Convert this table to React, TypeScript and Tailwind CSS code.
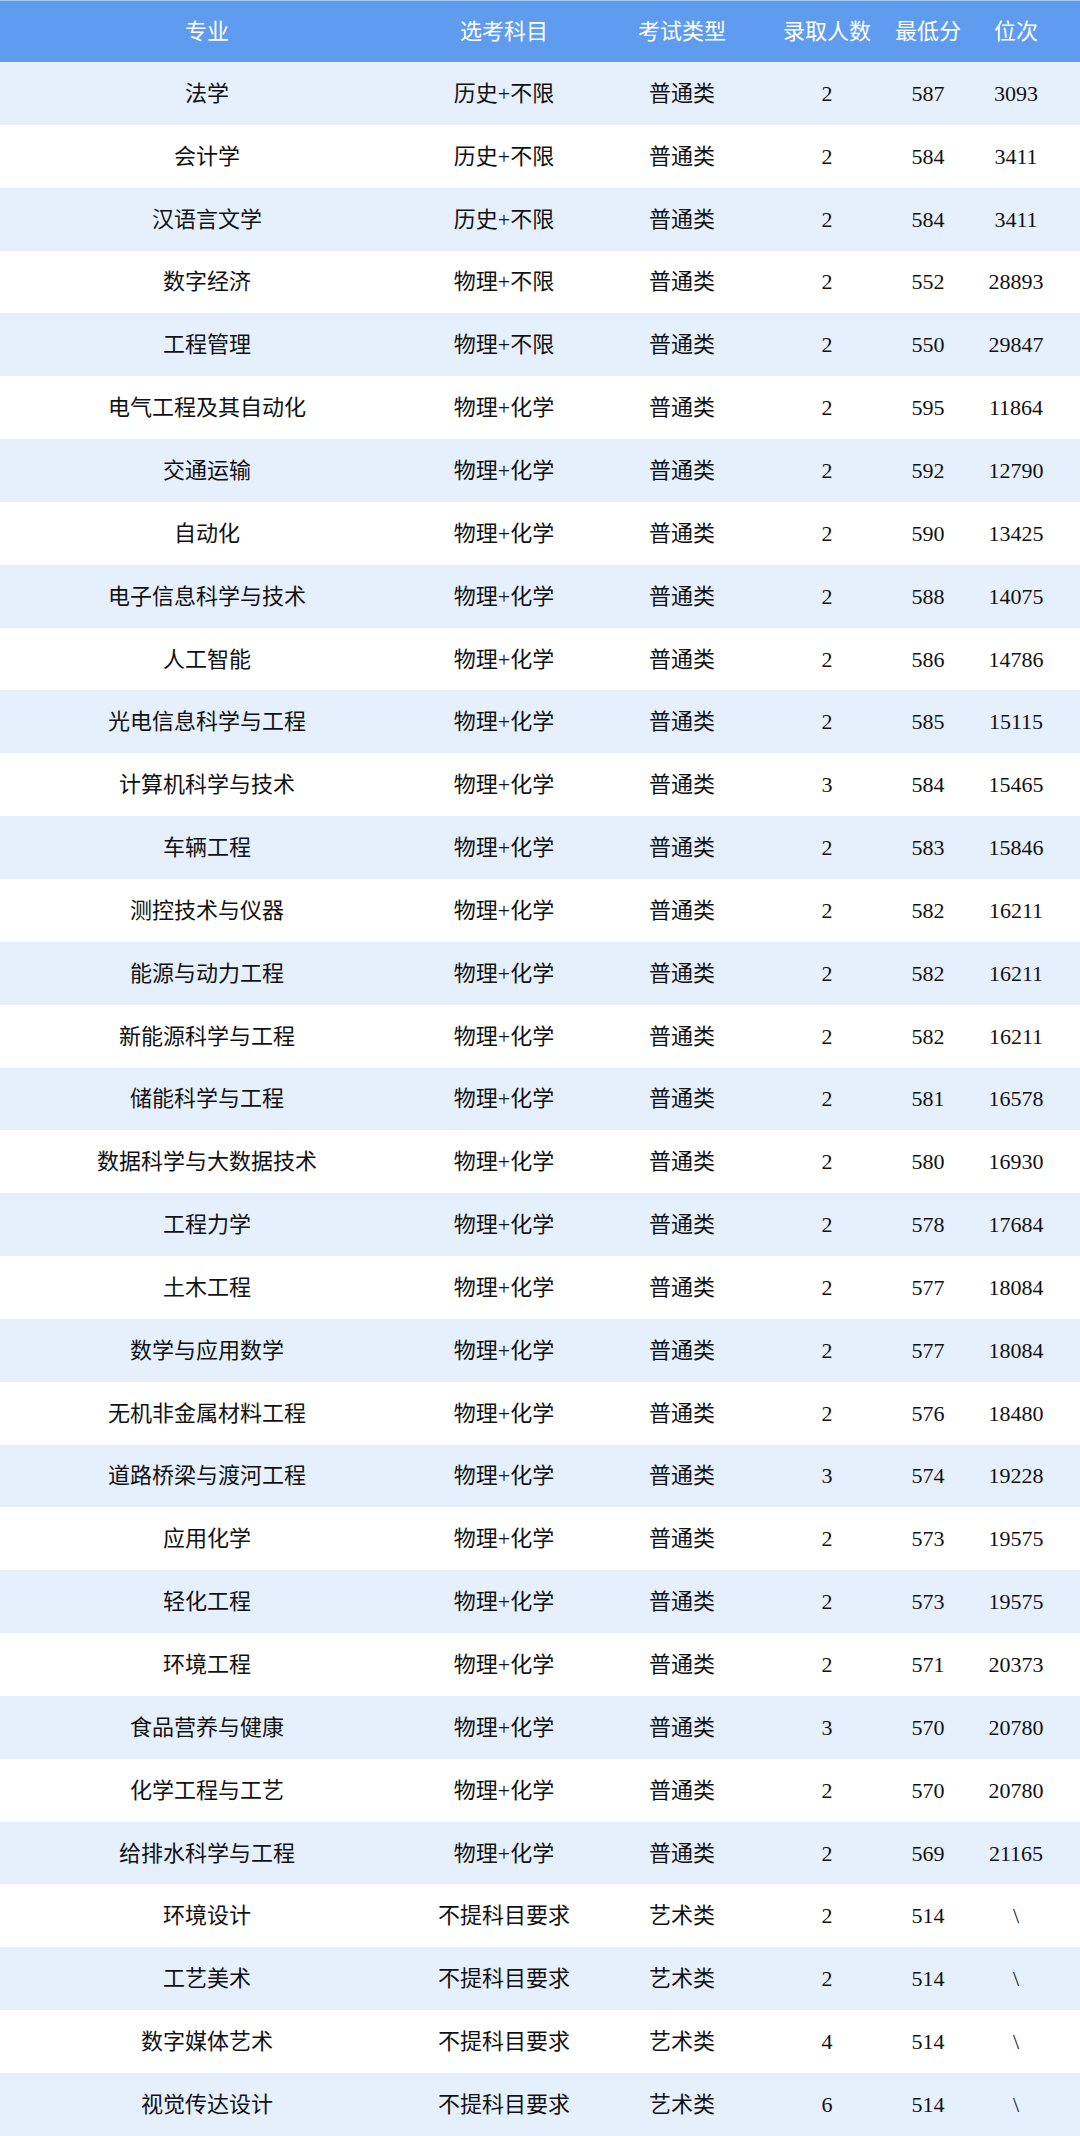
import React from 'react';

type Row = [string, string, string, number, number, string];

const rows: Row[] = [
  ['法学', '历史+不限', '普通类', 2, 587, '3093'],
  ['会计学', '历史+不限', '普通类', 2, 584, '3411'],
  ['汉语言文学', '历史+不限', '普通类', 2, 584, '3411'],
  ['数字经济', '物理+不限', '普通类', 2, 552, '28893'],
  ['工程管理', '物理+不限', '普通类', 2, 550, '29847'],
  ['电气工程及其自动化', '物理+化学', '普通类', 2, 595, '11864'],
  ['交通运输', '物理+化学', '普通类', 2, 592, '12790'],
  ['自动化', '物理+化学', '普通类', 2, 590, '13425'],
  ['电子信息科学与技术', '物理+化学', '普通类', 2, 588, '14075'],
  ['人工智能', '物理+化学', '普通类', 2, 586, '14786'],
  ['光电信息科学与工程', '物理+化学', '普通类', 2, 585, '15115'],
  ['计算机科学与技术', '物理+化学', '普通类', 3, 584, '15465'],
  ['车辆工程', '物理+化学', '普通类', 2, 583, '15846'],
  ['测控技术与仪器', '物理+化学', '普通类', 2, 582, '16211'],
  ['能源与动力工程', '物理+化学', '普通类', 2, 582, '16211'],
  ['新能源科学与工程', '物理+化学', '普通类', 2, 582, '16211'],
  ['储能科学与工程', '物理+化学', '普通类', 2, 581, '16578'],
  ['数据科学与大数据技术', '物理+化学', '普通类', 2, 580, '16930'],
  ['工程力学', '物理+化学', '普通类', 2, 578, '17684'],
  ['土木工程', '物理+化学', '普通类', 2, 577, '18084'],
  ['数学与应用数学', '物理+化学', '普通类', 2, 577, '18084'],
  ['无机非金属材料工程', '物理+化学', '普通类', 2, 576, '18480'],
  ['道路桥梁与渡河工程', '物理+化学', '普通类', 3, 574, '19228'],
  ['应用化学', '物理+化学', '普通类', 2, 573, '19575'],
  ['轻化工程', '物理+化学', '普通类', 2, 573, '19575'],
  ['环境工程', '物理+化学', '普通类', 2, 571, '20373'],
  ['食品营养与健康', '物理+化学', '普通类', 3, 570, '20780'],
  ['化学工程与工艺', '物理+化学', '普通类', 2, 570, '20780'],
  ['给排水科学与工程', '物理+化学', '普通类', 2, 569, '21165'],
  ['环境设计', '不提科目要求', '艺术类', 2, 514, '\\'],
  ['工艺美术', '不提科目要求', '艺术类', 2, 514, '\\'],
  ['数字媒体艺术', '不提科目要求', '艺术类', 4, 514, '\\'],
  ['视觉传达设计', '不提科目要求', '艺术类', 6, 514, '\\'],
];

const cols = 'grid grid-cols-[414px_180px_176px_114px_88px_88px_1fr] items-center text-center';

export default function App() {
  return (
    <div
      className="w-[1080px] bg-white text-[22px] text-[#111]"
      style={{ fontFamily: '"Liberation Serif", "Noto Sans CJK SC", serif' }}
    >
      <div className={`${cols} h-[62px] bg-[#5f9cef] text-white border-t border-[#a9c8f5]`}>
        <div>专业</div>
        <div>选考科目</div>
        <div>考试类型</div>
        <div>录取人数</div>
        <div>最低分</div>
        <div>位次</div>
        <div />
      </div>
      {rows.map((r, i) => (
        <div key={i} className={`${cols} h-[62.85px] ${i % 2 === 0 ? 'bg-[#e6f0fd]' : 'bg-white'}`}>
          <div>{r[0]}</div>
          <div>{r[1]}</div>
          <div>{r[2]}</div>
          <div>{r[3]}</div>
          <div>{r[4]}</div>
          <div>{r[5]}</div>
          <div />
        </div>
      ))}
    </div>
  );
}
